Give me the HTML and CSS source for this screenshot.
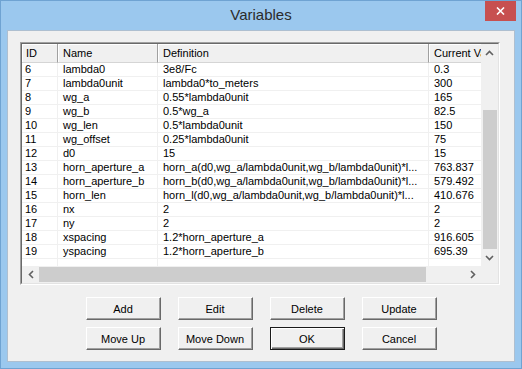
FILE: index.html
```html
<!DOCTYPE html>
<html lang="en">
<head>
    <meta charset="UTF-8">
    <meta name="viewport" content="width=device-width, initial-scale=1.0">
    <title>Variables</title>
    <link rel="stylesheet" href="styles.css">
</head>
<body>
    <div class="window">
        <div class="titlebar">
            <span></span>
            <h1 class="title">Variables</h1>
            <button class="close" title="Close">
                <svg width="9" height="8" viewBox="0 0 9 8"><path d="M1 0.5 L8 7.5 M8 0.5 L1 7.5" stroke="#fff" stroke-width="1.6" fill="none"/></svg>
            </button>
        </div>
        <div class="client">
            <div class="listview">
                <div class="listview_inner">
                    <div class="rows">
                        <div class="row head"><span>ID</span><span>Name</span><span>Definition</span><span>Current Value</span></div>
                        <div class="row"><span>6</span><span>lambda0</span><span>3e8/Fc</span><span>0.3</span></div>
                        <div class="row"><span>7</span><span>lambda0unit</span><span>lambda0*to_meters</span><span>300</span></div>
                        <div class="row"><span>8</span><span>wg_a</span><span>0.55*lambda0unit</span><span>165</span></div>
                        <div class="row"><span>9</span><span>wg_b</span><span>0.5*wg_a</span><span>82.5</span></div>
                        <div class="row"><span>10</span><span>wg_len</span><span>0.5*lambda0unit</span><span>150</span></div>
                        <div class="row"><span>11</span><span>wg_offset</span><span>0.25*lambda0unit</span><span>75</span></div>
                        <div class="row"><span>12</span><span>d0</span><span>15</span><span>15</span></div>
                        <div class="row"><span>13</span><span>horn_aperture_a</span><span>horn_a(d0,wg_a/lambda0unit,wg_b/lambda0unit)*l...</span><span>763.837</span></div>
                        <div class="row"><span>14</span><span>horn_aperture_b</span><span>horn_b(d0,wg_a/lambda0unit,wg_b/lambda0unit)*l...</span><span>579.492</span></div>
                        <div class="row"><span>15</span><span>horn_len</span><span>horn_l(d0,wg_a/lambda0unit,wg_b/lambda0unit)*l...</span><span>410.676</span></div>
                        <div class="row"><span>16</span><span>nx</span><span>2</span><span>2</span></div>
                        <div class="row"><span>17</span><span>ny</span><span>2</span><span>2</span></div>
                        <div class="row"><span>18</span><span>xspacing</span><span>1.2*horn_aperture_a</span><span>916.605</span></div>
                        <div class="row"><span>19</span><span>yspacing</span><span>1.2*horn_aperture_b</span><span>695.39</span></div>
                        <div class="row empty"><span></span><span></span><span></span><span></span></div>
                    </div>
                    <div class="vscroll">
                        <div class="arrow"><svg width="9" height="6" viewBox="0 0 9 6"><polyline points="1,5 4.5,1.5 8,5" stroke="#606060" stroke-width="1.6" fill="none"/></svg></div>
                        <div class="track"><div class="thumb"></div></div>
                        <div class="arrow"><svg width="9" height="6" viewBox="0 0 9 6"><polyline points="1,1 4.5,4.5 8,1" stroke="#606060" stroke-width="1.6" fill="none"/></svg></div>
                    </div>
                    <div class="hscroll">
                        <div class="arrow"><svg width="6" height="9" viewBox="0 0 6 9"><polyline points="5,1 1.5,4.5 5,8" stroke="#606060" stroke-width="1.6" fill="none"/></svg></div>
                        <div class="track"><div class="thumb"></div></div>
                        <div class="arrow"><svg width="6" height="9" viewBox="0 0 6 9"><polyline points="1,1 4.5,4.5 1,8" stroke="#606060" stroke-width="1.6" fill="none"/></svg></div>
                    </div>
                    <div class="corner"></div>
                </div>
            </div>
            <div class="buttons">
                <button class="btn">Add</button>
                <button class="btn">Edit</button>
                <button class="btn">Delete</button>
                <button class="btn">Update</button>
                <button class="btn">Move Up</button>
                <button class="btn">Move Down</button>
                <button class="btn default">OK</button>
                <button class="btn">Cancel</button>
            </div>
        </div>
    </div>
</body>
</html>
```
FILE: styles.css
```css
*,
*::before,
*::after{
    padding: 0;
    margin: 0;
    box-sizing: border-box;
}

body{
    font: 11px "Liberation Sans", Arial, sans-serif;
    color: #000;
    background: #fff;
}

.window{
    width: 522px;
    height: 369px;
    border: 1px solid #6fa3d2;
    background: #9bc8ee;
    padding: 0 6px 6px;
    display: flex;
    flex-direction: column;
}

.titlebar{
    height: 29px;
    display: grid;
    grid-template-columns: 1fr auto 1fr;
    align-items: start;
}

.title{
    font: 400 15px "Liberation Sans", Arial, sans-serif;
    color: #2b2b2b;
    line-height: 28px;
}

.close{
    justify-self: end;
    width: 31px;
    height: 20px;
    margin-right: -1px;
    border: none;
    background: #c75050;
    display: flex;
    align-items: center;
    justify-content: center;
}

.client{
    flex-grow: 1;
    background: #f0f0f0;
    border: 1px solid #aebfd0;
    padding: 11px 0 0 12px;
}

/* list view */
.listview{
    width: 480px;
    height: 243px;
    border: 1px solid;
    border-color: #a0a0a0 #fff #fff #a0a0a0;
}

.listview_inner{
    height: 100%;
    border: 1px solid;
    border-color: #696969 #e3e3e3 #e3e3e3 #696969;
    display: grid;
    grid-template-columns: 1fr 17px;
    grid-template-rows: 1fr 17px;
}

.rows{
    background: #fff;
    overflow: hidden;
}

.row{
    display: grid;
    grid-template-columns: 36px 100px 271px 75px;
    height: 14px;
    width: 482px;
}

.row span{
    border-right: 1px solid #f0f0f0;
    border-bottom: 1px solid #f0f0f0;
    padding-left: 5px;
    line-height: 13px;
    white-space: nowrap;
    overflow: hidden;
}

.row span:first-child{
    padding-left: 3px;
}

.row.head{
    height: 19px;
}

.row.head span{
    background: #f0f0f0;
    border-right-color: #a0a0a0;
    border-bottom-color: #d5d5d5;
    box-shadow: inset 1px 1px 0 #fff;
    line-height: 18px;
}

.row.head span:first-child{
    padding-left: 4px;
}

.row.empty{
    height: 8px;
}

.row.empty span{
    border-bottom: none;
}

/* scrollbars */
.vscroll,
.hscroll{
    display: flex;
    background: #f0f0f0;
}

.vscroll{
    flex-direction: column;
}

.arrow{
    width: 17px;
    height: 17px;
    display: flex;
    align-items: center;
    justify-content: center;
}

.track{
    flex-grow: 1;
    display: flex;
}

.vscroll .track{
    flex-direction: column;
}

.thumb{
    background: #cdcdcd;
}

.vscroll .thumb{
    margin: auto 1px 0 2px;
    height: 139px;
}

.hscroll .thumb{
    margin: 1px auto 1px 0;
    width: 387px;
}

.corner{
    background: #f0f0f0;
}

/* buttons */
.buttons{
    margin-top: 12px;
    margin-left: -12px;
    display: grid;
    grid-template-columns: repeat(4, 75px);
    column-gap: 17px;
    row-gap: 7px;
    justify-content: center;
}

.btn{
    height: 23px;
    font: 11px "Liberation Sans", Arial, sans-serif;
    color: #000;
    background: #f0f0f0;
    border: 1px solid;
    border-color: #fff #696969 #696969 #fff;
    box-shadow: inset -1px -1px 0 #a0a0a0;
}

.btn.default{
    border-color: #1a1a1a;
    box-shadow: inset 1px 1px 0 #fff, inset -1px -1px 0 #696969, inset -2px -2px 0 #a0a0a0;
}
```
